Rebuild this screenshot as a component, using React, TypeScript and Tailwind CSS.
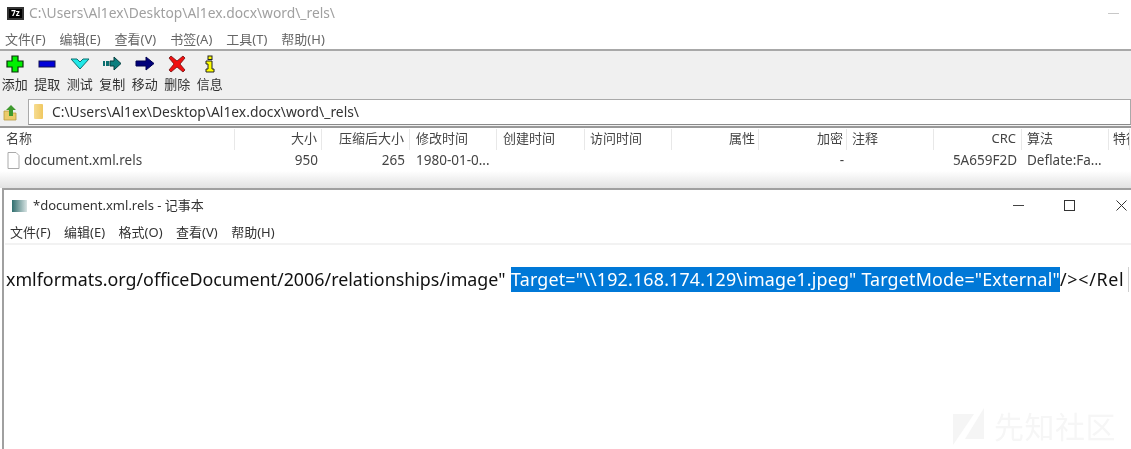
const sans = `font-['Noto_Sans','Noto_Sans_CJK_SC',sans-serif]`

const archiveMenu = ["文件(F)", "编辑(E)", "查看(V)", "书签(A)", "工具(T)", "帮助(H)"]
const notepadMenu = ["文件(F)", "编辑(E)", "格式(O)", "查看(V)", "帮助(H)"]

const PlusIcon = () => (
  <svg width="18" height="18" viewBox="0 0 18 18">
    <path d="M6 1h6v5h5v6h-5v5H6v-5H1V6h5z" fill="#00f000" stroke="#0a300a" strokeWidth="1.2" />
  </svg>
)
const MinusIcon = () => (
  <svg width="18" height="18" viewBox="0 0 18 18">
    <rect x="1" y="6" width="16" height="6" fill="#0000d8" stroke="#101050" strokeWidth="1" />
  </svg>
)
const TestIcon = () => (
  <svg width="20" height="18" viewBox="0 0 20 18">
    <path d="M1 4h6l3 3 3-3h6l-9 10z" fill="#20e8e8" stroke="#0d6f6f" strokeWidth="1" />
  </svg>
)
const CopyIcon = () => (
  <svg width="20" height="18" viewBox="0 0 20 18">
    <path d="M1 6h2v5H1zM4 6h3v5H4z" fill="#0b6f6f" />
    <path d="M8 6h4V2l7 6.500-7 6.500v-4H8z" fill="#0b7f7f" stroke="#063f3f" strokeWidth="1" />
  </svg>
)
const MoveIcon = () => (
  <svg width="20" height="18" viewBox="0 0 20 18">
    <path d="M1 6h10V2l8 6.500-8 6.500v-4H1z" fill="#00007a" stroke="#000050" strokeWidth="1" />
  </svg>
)
const DeleteIcon = () => (
  <svg width="18" height="18" viewBox="0 0 18 18">
    <path d="M3 1l6 5 6-5 2 2-5 6 5 6-2 2-6-5-6 5-2-2 5-6-5-6z" fill="#f01010" stroke="#701010" strokeWidth="0.8" />
  </svg>
)
const InfoIcon = () => (
  <svg width="12" height="18" viewBox="0 0 12 18">
    <rect x="4" y="1" width="4" height="3.500" fill="#ffff00" stroke="#222" strokeWidth="1" />
    <path d="M2 6h6v8h2v3H2v-3h2V9H2z" fill="#ffff00" stroke="#222" strokeWidth="1" />
  </svg>
)

const tools = [
  { label: "添加", icon: <PlusIcon /> },
  { label: "提取", icon: <MinusIcon /> },
  { label: "测试", icon: <TestIcon /> },
  { label: "复制", icon: <CopyIcon /> },
  { label: "移动", icon: <MoveIcon /> },
  { label: "删除", icon: <DeleteIcon /> },
  { label: "信息", icon: <InfoIcon /> },
]

const columns = [
  { label: "名称", width: "w-[235px]", align: "pl-[6px]" },
  { label: "大小", width: "w-[87px]", align: "justify-end pr-[4px]" },
  { label: "压缩后大小", width: "w-[88px]", align: "justify-end pr-[5px]" },
  { label: "修改时间", width: "w-[87px]", align: "pl-[6px]" },
  { label: "创建时间", width: "w-[88px]", align: "pl-[6px]" },
  { label: "访问时间", width: "w-[87px]", align: "pl-[5px]" },
  { label: "属性", width: "w-[87px]", align: "justify-end pr-[3px]" },
  { label: "加密", width: "w-[88px]", align: "justify-end pr-[3px]" },
  { label: "注释", width: "w-[87px]", align: "pl-[5px]" },
  { label: "CRC", width: "w-[88px]", align: "justify-end pr-[5px]" },
  { label: "算法", width: "w-[87px]", align: "pl-[5px]" },
  { label: "特征", width: "w-[21px]", align: "pl-[4px]" },
]

const cells = ["document.xml.rels", "950", "265", "1980-01-0...", "", "", "", "-", "", "5A659F2D", "Deflate:Fa...", ""]

export default function App() {
  return (
    <div className={`relative h-[449px] w-[1131px] overflow-hidden bg-white blur-[0.35px] ${sans}`}>
      {/* 7-zip window */}
      <div className="flex h-[26px] items-center pl-[7px]">
        <div className="flex h-[13px] w-[17px] items-center justify-center border-2 border-[#333] bg-black text-[8px] font-bold leading-none text-white">
          7z
        </div>
        <span className="ml-[5px] text-[13.800px] leading-none text-[#a0a0a0]">C:\Users\Al1ex\Desktop\Al1ex.docx\word\_rels\</span>
        <span className="ml-auto mr-[12px] h-px w-[11px] bg-[#c8c8c8]" />
      </div>
      <div className="flex h-[23px] items-center gap-[14px] pl-[5px] pt-[3px] text-[13px] leading-none text-[#666]">
        {archiveMenu.map((item) => (
          <span key={item}>{item}</span>
        ))}
      </div>
      <div className="flex h-[48px] gap-[3px] border-t-2 border-[#a8a8a8] bg-[#f0f0f0]">
        {tools.map((tool) => (
          <div key={tool.label} className="flex w-[29.500px] flex-col items-center pt-[3px]">
            <div className="flex h-[19px] items-center">{tool.icon}</div>
            <span className="mt-[3px] text-[13px] leading-[16px] text-[#333]">{tool.label}</span>
          </div>
        ))}
      </div>
      <div className="flex h-[29px] items-center bg-[#f0f0f0]">
        <svg width="28" height="18" viewBox="0 0 28 18" className="shrink-0">
          <path d="M4 8h6l2 2h4v7H4z" fill="#eccb6a" stroke="#b89a40" strokeWidth="0.8" />
          <path d="M11 2l5 5h-3v6H9V7H6z" fill="#3f9a2e" />
        </svg>
        <div className="flex h-[26px] flex-1 items-center border border-[#a9a9a9] border-b-[#8a8a8a] bg-white pl-[5px]">
          <div className="h-[15px] w-[9px] rounded-[1px] bg-gradient-to-r from-[#f6dc90] to-[#f0c860]" />
          <span className="ml-[9px] text-[13.850px] leading-none text-[#333]">C:\Users\Al1ex\Desktop\Al1ex.docx\word\_rels\</span>
        </div>
      </div>
      <div className="flex h-[24px] border-t-2 border-[#999] pt-[1px] text-[13px] leading-none text-[#444]">
        {columns.map((col) => (
          <div
            key={col.label}
            className={`flex ${col.width} ${col.align} shrink-0 items-center overflow-hidden whitespace-nowrap border-r border-[#e8e8e8] pb-[3px]`}
          >
            {col.label}
          </div>
        ))}
      </div>
      <div className="flex h-[21px] text-[13.500px] leading-none text-[#444]">
        {columns.map((col, i) => (
          <div
            key={col.label}
            className={`flex ${col.width} ${col.align} shrink-0 items-center overflow-hidden whitespace-nowrap`}
          >
            {i === 0 && (
              <svg width="13" height="17" viewBox="0 0 13 17" className="mr-[4px] ml-px shrink-0">
                <path d="M1 .5h8l3 3v13H1z" fill="#fff" stroke="#aaa" />
              </svg>
            )}
            {cells[i]}
          </div>
        ))}
      </div>
      <div className="h-[17px] bg-gradient-to-b from-white to-[#e2e2e2]" />

      {/* notepad window */}
      <div className="ml-[2px] h-[261px] border-l-2 border-t-2 border-[#a0a0a0] pl-px">
        <div className="flex h-[29px] items-center pl-[7px] pt-[2px]">
          <div className="h-[12px] w-[15px] bg-gradient-to-r from-[#2e6f6f] to-[#d8e4e4]" />
          <span className="ml-[6px] text-[13px] leading-none text-[#333]">*document.xml.rels - 记事本</span>
          <svg width="11" height="1" viewBox="0 0 11 1" className="ml-auto mr-[40px]">
            <rect width="11" height="1" fill="#444" />
          </svg>
          <svg width="11" height="11" viewBox="0 0 11 11" className="mr-[41px]">
            <rect x="0.500" y="0.500" width="10" height="10" fill="none" stroke="#333" />
          </svg>
          <svg width="11" height="11" viewBox="0 0 11 11" className="mr-[4px]">
            <path d="M.5.5l10 10M10.500.5l-10 10" stroke="#333" />
          </svg>
        </div>
        <div className="flex h-[24px] items-center gap-[13.500px] pl-[5px] pt-[3px] text-[13px] leading-none text-[#333]">
          {notepadMenu.map((item) => (
            <span key={item}>{item}</span>
          ))}
        </div>
        <div className="h-[206px] border-t-2 border-[#f2f2f2] pl-px pr-[2px]">
          <div className="mt-[22px] flex h-[25px] items-center overflow-hidden whitespace-nowrap border-r border-[#d0d0d0] text-[17.850px] leading-none text-[#111]">
            <span className="pr-px">xmlformats.org/officeDocument/2006/relationships/image"&nbsp;</span>
            <span className="bg-[#0078d7] leading-[25px] tracking-[0.18px] text-white">
              Target="\\192.168.174.129\image1.jpeg" TargetMode="External"
            </span>
            <span className="tracking-[0.7px]">/&gt;&lt;/Rel</span>
          </div>
        </div>
      </div>

      {/* watermark */}
      <div className="absolute left-[953px] top-[408px] flex items-center gap-[9px] text-[#f6f6f6]">
        <svg width="32" height="38" viewBox="0 0 32 38">
          <path d="M0 6h21L0 37zM31 0v31H12z" fill="#f5f5f5" />
        </svg>
        <span className="text-[30px] leading-none tracking-[0.5px]">先知社区</span>
      </div>
    </div>
  )
}
